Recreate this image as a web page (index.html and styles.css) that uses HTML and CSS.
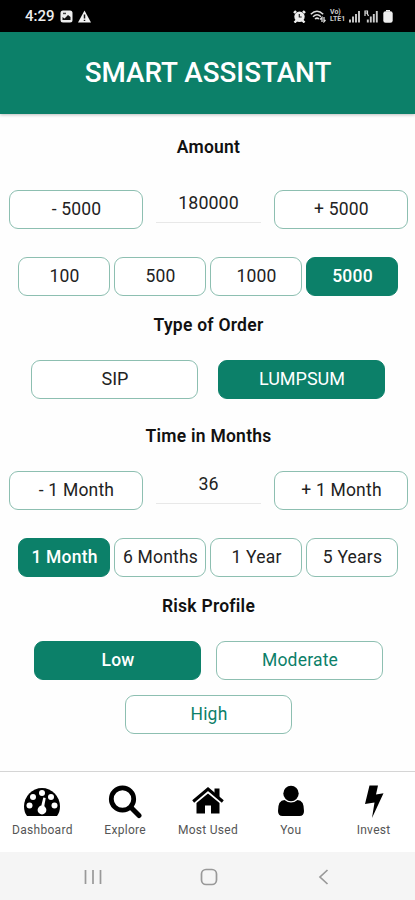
FILE: index.html
```html
<!DOCTYPE html>
<html lang="en">
<head>
    <meta charset="UTF-8">
    <meta name="viewport" content="width=device-width, initial-scale=1.0">
    <title>Smart Assistant</title>
    <link rel="stylesheet" href="styles.css">
</head>
<body>
    <div class="status-bar">
        <div class="status-left">
            <span class="time">4:29</span>
            <svg width="13" height="13" viewBox="0 0 13 13"><rect x="0.5" y="0.5" width="12" height="12" rx="2.5" fill="#eee"/><path d="M2.5 10V7l2 1.500 3.500-3.500 2.500 2V10z" fill="#111"/><rect x="3" y="2.700" width="3" height="1.500" fill="#444"/></svg>
            <svg width="13" height="13" viewBox="0 0 13 13"><path d="M6.5 0.5L13 12.5H0z" fill="#f2f2f2"/><path d="M6.5 4.5v4M6.5 9.7v1.4" stroke="#111" stroke-width="1.5"/></svg>
        </div>
        <div class="status-right">
            <svg width="13" height="13" viewBox="0 0 13 13"><circle cx="6.5" cy="6.7" r="5.200" fill="#eee"/><path d="M1 3l2-2M12 3l-2-2M1.500 12.500l2-2M11.500 12.500l-2-2" stroke="#eee" stroke-width="2.400"/><path d="M6.3 4v3h2.4" fill="none" stroke="#222" stroke-width="1.2"/></svg>
            <svg width="16" height="13" viewBox="0 0 16 13"><path d="M0.8 4.2Q7 -1.8 13.2 4.2M3 6.7Q7 2.8 11 6.7M5 9Q7 7.2 9 9" fill="none" stroke="#ddd" stroke-width="1.5"/><path d="M10 9.5l2-2v4.5M14 7v4.7l1.5-1.7" fill="none" stroke="#ddd" stroke-width="1.3"/></svg>
            <span class="volte"><b>Vo)</b><b>LTE1</b></span>
            <svg width="11" height="13" viewBox="0 0 11 13"><path d="M1 12.5v-3M4 12.5v-6M7 12.5V4M10 12.5V1" stroke="#ccc" stroke-width="1.9"/></svg>
            <svg width="14" height="13" viewBox="0 0 14 13"><path d="M1 6V1h2.5v2H1M3 3l1.5 3" fill="none" stroke="#ddd" stroke-width="1.2"/><path d="M3.8 12.5V9.5M6.8 12.5v-6M9.8 12.5V4M12.8 12.5V1" stroke="#ccc" stroke-width="1.9"/></svg>
            <svg class="battery" width="10" height="13" viewBox="0 0 10 13"><path d="M3 0h4v1.5H3z" fill="#eee"/><rect x="0.3" y="1.3" width="9.4" height="11.4" rx="2.3" fill="#eee"/></svg>
        </div>
    </div>

    <header class="header">
        <h1>SMART ASSISTANT</h1>
    </header>

    <main class="content">
        <h2>Amount</h2>
        <div class="stepper">
            <button class="btn">- 5000</button>
            <div class="value">180000</div>
            <button class="btn">+ 5000</button>
        </div>
        <div class="chips">
            <button class="btn">100</button>
            <button class="btn">500</button>
            <button class="btn">1000</button>
            <button class="btn active">5000</button>
        </div>

        <h2>Type of Order</h2>
        <div class="order">
            <button class="btn">SIP</button>
            <button class="btn active">LUMPSUM</button>
        </div>

        <h2>Time in Months</h2>
        <div class="stepper">
            <button class="btn">- 1 Month</button>
            <div class="value">36</div>
            <button class="btn">+ 1 Month</button>
        </div>
        <div class="chips">
            <button class="btn active">1 Month</button>
            <button class="btn">6 Months</button>
            <button class="btn">1 Year</button>
            <button class="btn">5 Years</button>
        </div>

        <h2>Risk Profile</h2>
        <div class="risk">
            <button class="btn active">Low</button>
            <button class="btn">Moderate</button>
            <button class="btn">High</button>
        </div>
    </main>

    <nav class="tabs">
        <a class="tab">
            <svg width="36" height="34" viewBox="0 0 36 34"><path d="M3 31Q0 27 0 21.500A18 18.500 0 0 1 36 21.500Q36 27 33 31Z"/><g fill="#fff"><circle cx="5.5" cy="20.500" r="3"/><circle cx="9" cy="12" r="3"/><circle cx="18" cy="8" r="3"/><circle cx="27" cy="12" r="3"/><circle cx="30.5" cy="20.500" r="3"/><circle cx="18" cy="25" r="4.4"/><path d="M16.5 24L19.3 12.500l2.400 .500L19.6 25z"/></g></svg>
            <span>Dashboard</span>
        </a>
        <a class="tab">
            <svg width="34" height="34" viewBox="0 0 34 34"><circle cx="14.5" cy="14" r="11.2" fill="none" stroke="#000" stroke-width="4.800"/><path d="M23 22.500l8 8" stroke="#000" stroke-width="5" stroke-linecap="round"/></svg>
            <span>Explore</span>
        </a>
        <a class="tab">
            <svg width="32" height="34" viewBox="0 0 32 34"><path d="M1.2 16.500L16 4l14.8 12.500" fill="none" stroke="#000" stroke-width="3"/><path d="M22.5 3.500h5v10.500l-5-4z"/><path d="M16 8.500L27.500 18v10.500h-8.500v-8h-6v8H4.500V18z"/></svg>
            <span>Most Used</span>
        </a>
        <a class="tab">
            <svg width="28" height="34" viewBox="0 0 28 34"><circle cx="14" cy="8.500" r="7.700"/><path d="M1 26Q1 15 7.500 15Q14 20 20.500 15Q27 15 27 26Q27 31 22.5 31H5.5Q1 31 1 26Z"/></svg>
            <span>You</span>
        </a>
        <a class="tab">
            <svg width="20" height="34" viewBox="0 0 20 34"><path d="M5.500 0.500h8.500L12 9.500l7.500-1.300L8 33 10.500 17.500 1 19z"/></svg>
            <span>Invest</span>
        </a>
    </nav>

    <div class="system-bar">
        <svg width="18" height="16" viewBox="0 0 18 16"><path d="M1.5 1v14M9 1v14M16.5 1v14"/></svg>
        <svg width="18" height="18" viewBox="0 0 18 18"><rect x="1.5" y="1.5" width="15" height="15" rx="4.5"/></svg>
        <svg width="18" height="16" viewBox="0 0 18 16"><path d="M12.5 1L5 8l7.5 7"/></svg>
    </div>
</body>
</html>
```
FILE: styles.css
```css
* {
    box-sizing: border-box;
}

body {
    margin: 0;
    height: 900px;
    display: flex;
    flex-direction: column;
    background: #fefefe;
    font-family: Roboto, sans-serif;
    color: #222;
    overflow: hidden;
}

.status-bar {
    height: 32px;
    padding: 0 22px 0 25px;
    display: flex;
    align-items: center;
    justify-content: space-between;
    background: #000;
    color: #eee;
}

.status-left,
.status-right {
    display: flex;
    align-items: center;
}

.status-left {
    gap: 5px;
}

.status-right {
    gap: 4px;
}

.time {
    font-size: 15px;
    font-weight: 500;
}

.volte {
    display: flex;
    flex-direction: column;
    width: 15px;
    font-size: 7px;
    line-height: 7px;
    color: #ccc;
}

.battery {
    margin-left: 1px;
}

.header {
    height: 82px;
    display: flex;
    align-items: center;
    justify-content: center;
    background: #0c8069;
    box-shadow: 0 1px 3px rgba(0, 0, 0, 0.25);
}

h1 {
    margin: 0 0 2px 1px;
    font-size: 27.8px;
    font-weight: 500;
    color: #fff;
}

.content {
    flex: 1;
    padding-top: 21px;
}

h2 {
    margin: 0;
    padding-left: 2px;
    font-size: 17.5px;
    font-weight: 600;
    line-height: 24px;
    letter-spacing: 0.25px;
    text-align: center;
    color: #111;
}

.btn {
    height: 39px;
    padding: 0 0 2px 1px;
    border: 1px solid #8dbfb1;
    border-radius: 9px;
    background: #fff;
    color: #222;
    font-family: inherit;
    font-size: 17.5px;
    letter-spacing: 0.2px;
    white-space: nowrap;
}

.btn.active {
    background: #0c8069;
    border-color: #0c8069;
    color: #fff;
}

.stepper {
    display: grid;
    grid-template-columns: 134px 105px 134px;
    justify-content: space-between;
    margin-top: 31px;
    padding: 0 7px 0 9px;
}

.value {
    height: 33px;
    border-bottom: 1px solid #e8e8e8;
    font-size: 17.8px;
    line-height: 26px;
    letter-spacing: 0.1px;
    text-align: center;
}

.chips {
    display: grid;
    grid-template-columns: repeat(4, 1fr);
    gap: 4px;
    margin: 28px 17px 17px 18px;
}

.chips .active {
    font-weight: 500;
}

.order {
    display: flex;
    justify-content: center;
    gap: 20px;
    margin: 23px 0 25px;
    padding-left: 1px;
}

.order .btn,
.risk .btn {
    width: 167px;
}

.order .btn {
    font-size: 18px;
    letter-spacing: 0;
}

/* second title block sits a little tighter */
.order + h2 + .stepper {
    margin-top: 23px;
}

.risk {
    display: flex;
    flex-wrap: wrap;
    justify-content: center;
    gap: 15px;
    margin-top: 23px;
    padding-left: 2px;
}

.risk .btn {
    color: #0c8069;
}

.risk .btn.active {
    color: #fff;
    font-weight: 500;
}

.tabs {
    height: 81px;
    display: grid;
    grid-template-columns: repeat(5, 1fr);
    padding-left: 1px;
    border-top: 1px solid #d5d5d5;
    background: #fff;
}

.tab {
    display: flex;
    flex-direction: column;
    align-items: center;
    padding-top: 13px;
    font-size: 12px;
    line-height: 23px;
    letter-spacing: 0.3px;
    color: #555;
}

.tab svg {
    fill: #000;
}

.system-bar {
    height: 48px;
    padding: 2px 82px 0 84px;
    display: flex;
    align-items: center;
    justify-content: space-between;
    background: #f5f5f5;
}

.system-bar svg {
    fill: none;
    stroke: #999;
    stroke-width: 1.7;
}
```
